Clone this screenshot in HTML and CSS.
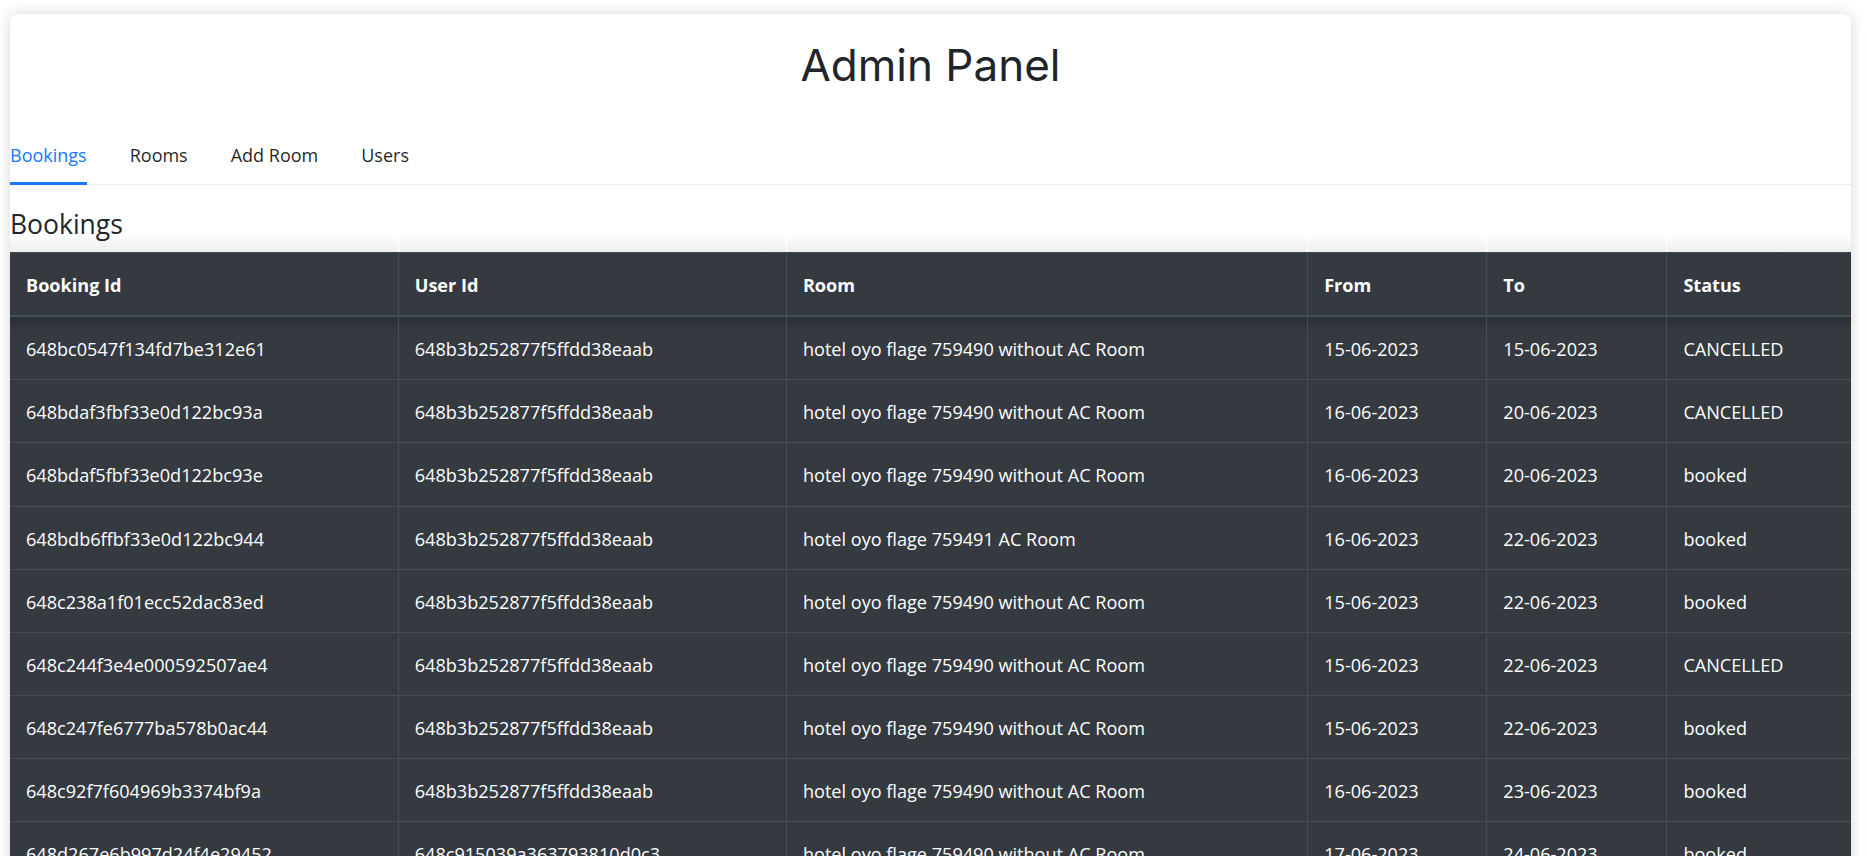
FILE: index.html
```html
<!DOCTYPE html>
<html lang="en">
<head>
<meta charset="utf-8">
<title>Admin Panel</title>
<link rel="stylesheet" href="styles.css">
</head>
<body>
<div class="card">
  <h1 class="title">Admin Panel</h1>
  <nav class="tabs">
    <a class="tab active">Bookings</a>
    <a class="tab">Rooms</a>
    <a class="tab">Add Room</a>
    <a class="tab">Users</a>
  </nav>
  <h2 class="section-title">Bookings</h2>
  <table class="bookings">
    <colgroup>
      <col class="c-id"><col class="c-user"><col class="c-room"><col class="c-from"><col class="c-to"><col class="c-status">
    </colgroup>
    <thead>
      <tr><th>Booking Id</th><th>User Id</th><th>Room</th><th>From</th><th>To</th><th>Status</th></tr>
    </thead>
    <tbody>
      <tr><td>648bc0547f134fd7be312e61</td><td>648b3b252877f5ffdd38eaab</td><td>hotel oyo flage 759490 without AC Room</td><td>15-06-2023</td><td>15-06-2023</td><td>CANCELLED</td></tr>
      <tr><td>648bdaf3fbf33e0d122bc93a</td><td>648b3b252877f5ffdd38eaab</td><td>hotel oyo flage 759490 without AC Room</td><td>16-06-2023</td><td>20-06-2023</td><td>CANCELLED</td></tr>
      <tr><td>648bdaf5fbf33e0d122bc93e</td><td>648b3b252877f5ffdd38eaab</td><td>hotel oyo flage 759490 without AC Room</td><td>16-06-2023</td><td>20-06-2023</td><td>booked</td></tr>
      <tr><td>648bdb6ffbf33e0d122bc944</td><td>648b3b252877f5ffdd38eaab</td><td>hotel oyo flage 759491 AC Room</td><td>16-06-2023</td><td>22-06-2023</td><td>booked</td></tr>
      <tr><td>648c238a1f01ecc52dac83ed</td><td>648b3b252877f5ffdd38eaab</td><td>hotel oyo flage 759490 without AC Room</td><td>15-06-2023</td><td>22-06-2023</td><td>booked</td></tr>
      <tr><td>648c244f3e4e000592507ae4</td><td>648b3b252877f5ffdd38eaab</td><td>hotel oyo flage 759490 without AC Room</td><td>15-06-2023</td><td>22-06-2023</td><td>CANCELLED</td></tr>
      <tr><td>648c247fe6777ba578b0ac44</td><td>648b3b252877f5ffdd38eaab</td><td>hotel oyo flage 759490 without AC Room</td><td>15-06-2023</td><td>22-06-2023</td><td>booked</td></tr>
      <tr><td>648c92f7f604969b3374bf9a</td><td>648b3b252877f5ffdd38eaab</td><td>hotel oyo flage 759490 without AC Room</td><td>16-06-2023</td><td>23-06-2023</td><td>booked</td></tr>
      <tr><td>648d267e6b997d24f4e29452</td><td>648c915039a363793810d0c3</td><td>hotel oyo flage 759490 without AC Room</td><td>17-06-2023</td><td>24-06-2023</td><td>booked</td></tr>
    </tbody>
  </table>
</div>
</body>
</html>
```

FILE: styles.css
```css
html, body {
  margin: 0;
  padding: 0;
  background: #ffffff;
}

body {
  font-family: "Open Sans", "Noto Sans", sans-serif;
  color: #212529;
}

.card {
  margin: 14px 16px 0 10px;
  background: #ffffff;
  border-radius: 8px 8px 0 0;
  box-shadow: 0 0 16px rgba(0, 0, 0, 0.16);
  overflow: hidden;
}

.title {
  margin: 0;
  padding-top: 25px;
  font-family: "Inter", "Open Sans", sans-serif;
  font-weight: 400;
  font-size: 44px;
  line-height: 52px;
  text-align: center;
  color: #212529;
}

.tabs {
  display: flex;
  gap: 43px;
  margin-top: 34px;
  border-bottom: 1px solid #ececec;
}

.tab {
  position: relative;
  padding: 17px 0 15px;
  font-size: 18px;
  line-height: 27px;
  color: rgba(0, 0, 0, 0.88);
  cursor: pointer;
}

.tab.active {
  color: #1677ff;
}

.tab.active::after {
  content: "";
  position: absolute;
  left: 0;
  right: 0;
  bottom: -1px;
  height: 3px;
  background: #1677ff;
}

.section-title {
  margin: 24px 0 12px;
  padding-left: 0;
  font-size: 26.5px;
  font-weight: 400;
  line-height: 31px;
  color: #212529;
}

.bookings {
  width: 100%;
  table-layout: fixed;
  border-collapse: collapse;
  background: #343a40;
  color: #ffffff;
  font-size: 18.1px;
  line-height: 26.12px;
}

.c-id { width: 388px; }
.c-user { width: 388px; }
.c-room { width: 521px; }
.c-from { width: 179px; }
.c-to { width: 180px; }
.c-status { width: 184px; }

.bookings th,
.bookings td {
  border: 1px solid #454d55;
  padding: 19px 16px 17px;
  text-align: left;
  white-space: nowrap;
  overflow: hidden;
}

.bookings tr > :first-child { border-left: none; }
.bookings tr > :last-child { border-right: none; }

.bookings th {
  position: relative;
  font-weight: 700;
  border-bottom: 2px solid #454d55;
  overflow: visible;
  z-index: 1;
}

.bookings th::before {
  content: "";
  position: absolute;
  left: 0;
  right: 0;
  bottom: 100%;
  height: 20px;
  background: linear-gradient(to top, rgba(0, 0, 0, 0.07), rgba(0, 0, 0, 0));
  pointer-events: none;
}

.bookings th::after {
  content: "";
  position: absolute;
  left: 0;
  right: 0;
  top: calc(100% + 2px);
  height: 16px;
  background: linear-gradient(to bottom, rgba(0, 0, 0, 0.18), rgba(0, 0, 0, 0));
  pointer-events: none;
}
```
